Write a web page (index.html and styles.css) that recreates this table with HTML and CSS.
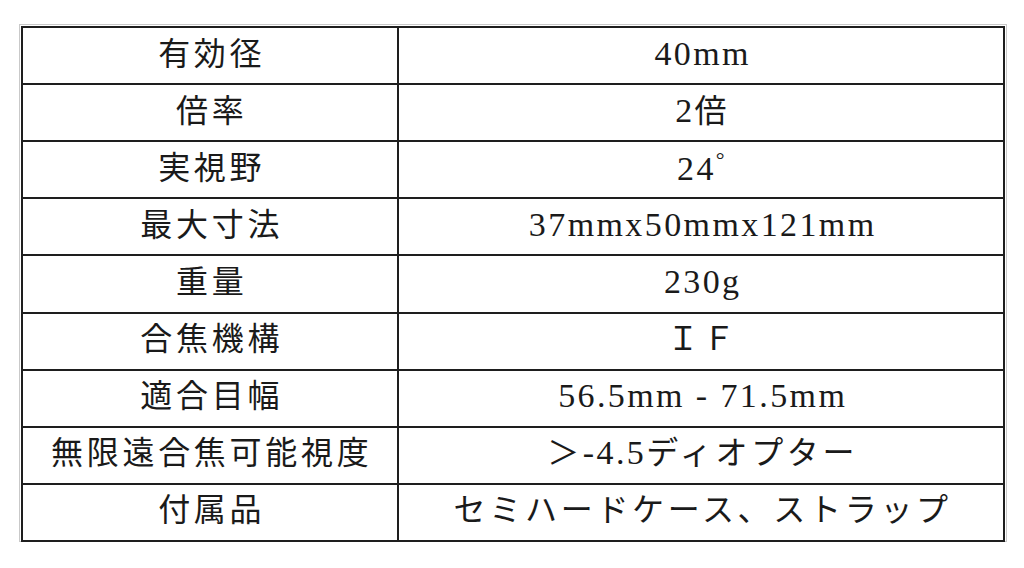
FILE: index.html
```html
<!DOCTYPE html>
<html lang="ja">
<head>
<meta charset="utf-8">
<link rel="stylesheet" href="styles.css">
</head>
<body>
<div class="frame">
<table class="spec">
<tr><td class="k">有効径</td><td class="v"><span class="n">40mm</span></td></tr>
<tr><td class="k">倍率</td><td class="v"><span class="n">2</span>倍</td></tr>
<tr><td class="k">実視野</td><td class="v"><span class="n">24</span><span class="deg">°</span></td></tr>
<tr><td class="k">最大寸法</td><td class="v"><span class="n">37mmx50mmx121mm</span></td></tr>
<tr><td class="k">重量</td><td class="v"><span class="n">230g</span></td></tr>
<tr><td class="k">合焦機構</td><td class="v">ＩＦ</td></tr>
<tr><td class="k">適合目幅</td><td class="v"><span class="n">56.5mm - 71.5mm</span></td></tr>
<tr><td class="k">無限遠合焦可能視度</td><td class="v">＞<span class="n">-4.5</span>ディオプター</td></tr>
<tr><td class="k">付属品</td><td class="v">セミハードケース、ストラップ</td></tr>
</table>
</div>
</body>
</html>
```

FILE: styles.css
```css
html, body {
  margin: 0;
  padding: 0;
  background: #ffffff;
}
body {
  padding: 24px 0 0 19px;
}
.frame {
  width: 988px;
  height: 518px;
  border: 1px solid #c9c9c9;
  padding: 1px;
  box-sizing: border-box;
  display: flex;
}
.spec {
  border-collapse: collapse;
  width: 986px;
  height: 516px;
  font-family: "Liberation Serif", "Noto Sans CJK JP", serif;
  font-size: 32px;
  font-weight: normal;
  letter-spacing: 3.7px;
  color: #1a1a1a;
}
.spec td {
  border: 2px solid #1e1e1e;
  text-align: center;
  vertical-align: middle;
  height: 50px;
  padding: 0 0 4px 3.7px;
  line-height: 1;
}
.spec td.k {
  width: 370px;
}
.n {
  font-size: 34px;
  letter-spacing: 2.4px;
  line-height: 1;
}
.deg {
  font-size: 22px;
  line-height: 1;
  vertical-align: 13px;
}
```
